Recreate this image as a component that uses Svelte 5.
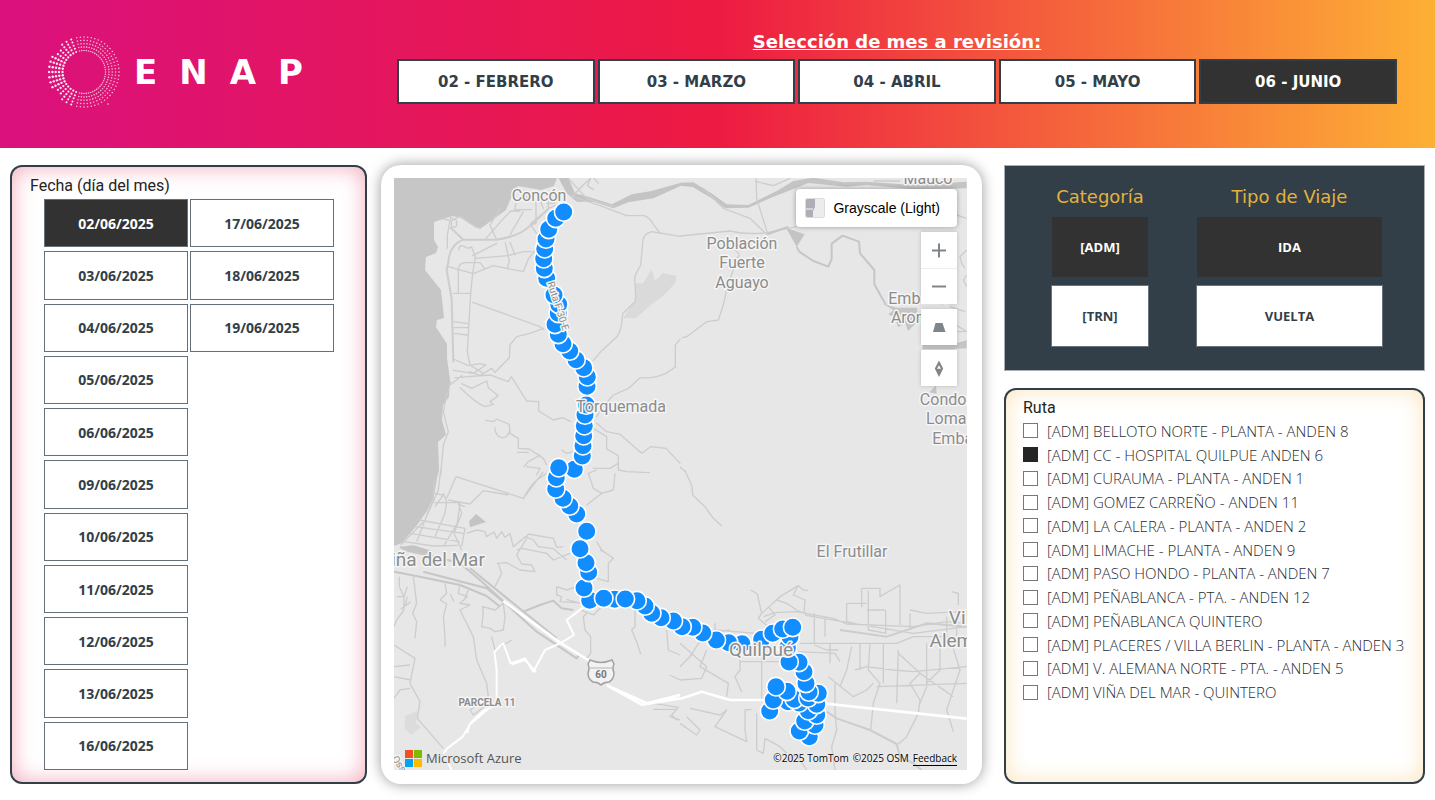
<script>
  const months = ['02 - FEBRERO', '03 - MARZO', '04 - ABRIL', '05 - MAYO', '06 - JUNIO'];
  const dates = [
    '02/06/2025', '03/06/2025', '04/06/2025', '05/06/2025', '06/06/2025', '09/06/2025',
    '10/06/2025', '11/06/2025', '12/06/2025', '13/06/2025', '16/06/2025',
    '17/06/2025', '18/06/2025', '19/06/2025'
  ];
  const routes = [
    '[ADM] BELLOTO NORTE - PLANTA - ANDEN 8',
    '[ADM] CC - HOSPITAL QUILPUE ANDEN 6',
    '[ADM] CURAUMA - PLANTA - ANDEN 1',
    '[ADM] GOMEZ CARREÑO - ANDEN 11',
    '[ADM] LA CALERA - PLANTA - ANDEN 2',
    '[ADM] LIMACHE - PLANTA - ANDEN 9',
    '[ADM] PASO HONDO - PLANTA - ANDEN 7',
    '[ADM] PEÑABLANCA - PTA. - ANDEN 12',
    '[ADM] PEÑABLANCA QUINTERO',
    '[ADM] PLACERES / VILLA BERLIN - PLANTA - ANDEN 3',
    '[ADM] V. ALEMANA NORTE - PTA. - ANDEN 5',
    '[ADM] VIÑA DEL MAR - QUINTERO'
  ];
  const groups = [
    { title: 'Categoría', kind: 'category', options: ['[ADM]', '[TRN]'] },
    { title: 'Tipo de Viaje', kind: 'trip', options: ['IDA', 'VUELTA'] }
  ];

  let month = $state('06 - JUNIO');
  let date = $state('02/06/2025');
  let chosen = $state({ category: '[ADM]', trip: 'IDA' });
  let selectedRoutes = $state(['[ADM] CC - HOSPITAL QUILPUE ANDEN 6']);

  // GPS positions of the trip; northern points are painted over southern ones
  const track = [
    [563.7, 212], [555.7, 218.3], [548.7, 229.3], [546, 239], [544.7, 248.7], [543.7, 258.7],
    [544.3, 268.3], [546.7, 278.3], [554, 295], [558.7, 304.3], [558.3, 313.3], [555, 324.3],
    [558.3, 334.3], [563, 343.7], [569.7, 351], [576, 359.7], [583.7, 367.7], [587.3, 376.7],
    [587, 386.3], [586.3, 405], [585, 415], [584.3, 425.7], [583.7, 435.7], [583, 445.7],
    [582.3, 456], [574.3, 469.3], [558.7, 467.7], [556.3, 477.7], [555.7, 489], [563, 498.3],
    [569.7, 506], [576.7, 514], [586.7, 531.3], [580, 548.7], [586, 562.7], [588.7, 572.3],
    [584, 588], [589.7, 600.3], [603.7, 598.3], [614.7, 599.3], [625.3, 599], [637, 600.7],
    [645, 606], [651.7, 613.3], [661, 617.7], [673.3, 621], [682, 626.7], [692.7, 627.3],
    [702.7, 633], [716.3, 640], [728.7, 642.7], [742, 643.7], [761.7, 639.3], [772.7, 633.3],
    [782.7, 629], [792.7, 627.3], [790, 636.7], [787.3, 648], [789, 662], [799, 662.3],
    [804, 671.7], [806, 683.3], [809, 692], [818.3, 693.3], [808, 698], [816.7, 704.3],
    [816.7, 715], [815, 725], [809.3, 736.7], [799.3, 731], [804.7, 721], [808.3, 710.7],
    [776, 686.7], [787, 691.3], [794.3, 699.3], [788, 701.7], [799, 703], [773.3, 700], [769.7, 711]
  ].sort((a, b) => b[1] - a[1]);

  // The ring is dense and faint on the east side, with fewer, bolder spokes on the west side
  const dots = [];
  [21.5, 25, 28.3, 31.6, 35].forEach((radius, ring) => {
    for (let i = 0; i < 60; i++) {
      const angle = (i / 60) * Math.PI * 2;
      if (Math.cos(angle) < -0.3) continue;
      dots.push([36 + Math.cos(angle) * radius, 36 + Math.sin(angle) * radius, 0.8]);
    }
    for (let i = 0; i < 42; i++) {
      const angle = (i / 42) * Math.PI * 2;
      const west = -Math.cos(angle);
      if (west < 0.3 || (ring === 4 && west > 0.72 && west < 0.85)) continue;
      dots.push([36 - west * radius, 36 + Math.sin(angle) * radius, 0.9 + west * 0.3]);
    }
  });
</script>

<div class="page">
  <header>
    <div class="brand">
      <svg class="ring" viewBox="0 0 72 72" aria-hidden="true">
        {#each dots as [x, y, r]}
          <circle cx={x} cy={y} {r} fill="#fff" fill-opacity={r > 0.85 ? 0.92 : 0.7} />
        {/each}
        <circle cx="60" cy="68" r="1" fill="#fff" fill-opacity=".45" />
      </svg>
      <div class="wordmark"><span>E</span><span>N</span><span>A</span><span>P</span></div>
    </div>
    <div class="months">
      <h1>Selección de mes a revisión:</h1>
      <div class="month-row">
        {#each months as m}
          <button class:on={month === m} aria-pressed={month === m} onclick={() => (month = m)}>{m}</button>
        {/each}
      </div>
    </div>
  </header>

  <main>
    <section class="panel dates-panel">
      <h2>Fecha (día del mes)</h2>
      <div class="dates">
        {#each dates as d}
          <button class:on={date === d} aria-pressed={date === d} onclick={() => (date = d)}>{d}</button>
        {/each}
      </div>
    </section>

    <section class="map-card" aria-label="Recorrido">
      <div class="map">
        <svg class="canvas" viewBox="394 178 573 592" preserveAspectRatio="xMidYMid slice">
          <rect x="394" y="178" width="573" height="592" fill="#e7e7e7" />
          <path fill="#c6c6c6" d="M394 178H557L554 186L541 190L518 186L510 200L506 210L480 229L462 218L452 216L434 222V240L438 247L436 253L426 257L425 270L441 290L444 318L437 320L436 327L447 344V358L450 380L449 397L443 405L442 420L446 435L438 442L439 470L437 478L434 496L427 511L417 525L402 543L394 546Z" />

          <g transform="translate(380 155) scale(.33333)" fill="none" stroke="#cdcdcd" stroke-width="4" stroke-linejoin="round" stroke-linecap="round">
            <path stroke="none" fill="#dadada" d="M730 490L768 430L765 385L790 385L815 342L825 378L848 354L888 362V382L848 424L812 450L768 490Z" />
            <path stroke="none" fill="#c4c4c4" d="M535 68H565L585 115L625 125L696 148L755 118L815 108L900 84V94L820 130L745 142L700 160L640 140L590 140L560 115Z" />
            <path d="M570 122L660 152L740 182H792Q812 190 820 208L840 234L900 244M565 70L620 130L700 155M578 123L612 88L632 70L622 92L640 104M642 70L655 84" />
            <path d="M838 234L815 230Q792 236 789 255L782 330L764 364L767 425L765 440L728 476Q725 530 710 546L665 587L640 617" />
            <path d="M900 553L886 570V636L858 655Q820 672 780 668L746 700L700 720L665 760L650 785" />
            <path stroke-width="6" d="M205 322Q208 270 250 254H350Q420 244 450 212L505 162M250 254L212 218M205 322L200 345L215 432L220 620" />
            <path d="M222 194L242 182M222 194L212 186L202 240V280M215 205a8 8 0 1 0 14 0a8 8 0 1 0-14 0M236 285Q238 262 262 280L275 276L286 305L278 356L272 415L262 590L270 630L310 655M278 302L350 265M285 310L385 302L430 290L454 290M235 415V345Q235 325 255 323H300L315 342M205 335L280 356L340 332L430 350L445 312L480 268M376 262L388 318L383 336M390 262L405 300M350 254L330 210L360 160M318 250L362 200L392 168H420M430 170L390 240M408 145L404 164H455M468 140V205L452 210L470 235M445 130L430 115M480 135L490 160M505 130V160L530 150M500 145H525M453 205L490 175M205 195L190 192M245 188L290 218" />
            <path d="M220 415H272M222 500L264 506M222 518H264M222 535L262 540M220 612L265 632L300 626L318 630L280 655L220 646M268 650L300 662L335 640L345 652L388 608L390 570L410 545L450 535L490 520M278 442L480 515L492 524M225 668L330 660L385 680L394 665L440 738L476 740V768L520 795L548 788L572 800M210 690L245 662M245 686L275 700L320 678L325 698L355 722L330 740L340 748L315 755Q290 745 262 718L240 698M212 680L200 720L190 770L205 830L190 870L182 960M318 796L340 800L350 792L388 808L390 835L415 850V880L448 882L490 910L500 930M345 818a18 22 0 1 0 45 5M432 935L445 920L480 900M440 935L480 940L470 960M412 892L445 892M545 885L560 895L580 890M650 805L680 830L720 838L785 895L812 875L858 880L900 925M640 820L680 845V882L715 902V945L740 950L808 953M640 940L690 940L715 925" />
          </g>

          <g transform="translate(680 155) scale(.33333)" fill="none" stroke="#cdcdcd" stroke-width="4" stroke-linejoin="round">
            <path stroke="none" fill="#c4c4c4" d="M0 83L40 82L90 112L140 148L205 150L290 108L340 78L400 68L490 82L560 80L700 90L860 80V100L700 103L560 90L500 95L385 84L270 130L205 158L135 160L95 130L38 96L0 92Z" />
            <path stroke="none" fill="#c4c4c4" d="M318 218L374 238L350 275ZM610 446L650 458H712V472L695 490L712 500L684 528L676 505L654 517L645 488L625 478L640 466ZM728 570H810L860 556V580L820 582H728ZM768 690L748 712L770 716Z" />
            <path d="M0 243L150 228Q200 240 262 233L350 215M228 70L230 130L262 233M70 100L130 160L210 190L262 240M262 240L320 218M230 80L280 92L330 70M580 78H660" />
            <path stroke-width="6" stroke="#c6c6c6" d="M262 236L325 216M350 275L358 290L400 318L445 335L455 312V266L488 242L537 260L540 295L583 345V388L618 450" />
            <path d="M165 285Q185 300 172 308L150 320L160 345L140 400Q135 440 115 495L80 500L20 545L5 548M830 180L860 190M860 285L840 305L845 325L855 340M860 360L850 375L860 395M810 455L855 470M812 500L860 530M830 530H860M0 935L16 950" />
          </g>

          <g transform="translate(380 470) scale(.33333)" fill="none" stroke="#cdcdcd" stroke-width="4" stroke-linejoin="round">
            <path stroke="none" fill="#c4c4c4" d="M267 154L288 132L318 156L270 172ZM62 230L100 226L160 244L130 256L70 242Z" />
            <path stroke="none" fill="#dcdcdc" d="M75 738L112 722L108 760L122 772L94 795L74 775Z" />
            <path d="M182 0L175 60L135 150L62 225M162 30L160 85L110 215M190 70L200 95L195 130L165 200M162 98H240L232 160L190 230M160 70L190 75L165 110M235 100L245 130L222 190L245 240M105 170L250 190M90 190L240 215M118 150L255 175L245 230M72 215L160 228L235 226M200 85L228 20L430 85L490 5M205 90L270 102L310 62L385 75M430 88Q440 60 470 30L500 10M255 110L240 105M260 190L290 180L315 185L320 200L342 186L350 205L365 185L375 202L390 190L400 230L436 200L460 210L475 230L520 236L560 270M410 240L425 235L500 250L520 270L570 250M350 280L380 278L420 300L465 305L455 285L425 282L410 255L440 205M355 282L365 310L345 350M440 200L445 192L520 205L530 232L550 230M650 215L665 240L700 265L685 280V335L650 325M660 240L680 250M620 105L665 70L700 60L705 10M650 0L625 10L640 55L665 70" />
            <path stroke-width="6" stroke="#c6c6c6" d="M42 305L120 320L240 345L320 378L360 410M130 305L320 355L370 395M60 232L240 280L300 330L470 485L590 565L600 550M270 295L530 505M430 425L480 405L520 392L545 415L580 420" />
            <path d="M530 350L560 360L590 350M530 350V375L545 380L540 395L590 398M560 388L600 400M600 420L640 435L665 410M620 430L610 440L615 480L632 500V550L620 565M765 410V470L755 480L770 515L782 552M58 320V350L72 380V420L50 450L42 470M100 320L110 400L98 430L110 455L105 505M50 380H72L82 350M82 380L75 410M62 418L92 395M195 340L200 370L180 390L200 402L190 440L195 500V530M240 340L235 370L262 380L240 400L270 405L240 420L280 500L290 570L320 640L325 680L300 700L270 720L280 735L320 705M210 372L222 395M265 360L255 385M308 410L345 420L370 400L375 440L370 480L345 485L330 475L305 470L310 430ZM335 500L345 540L395 510M42 525L105 565L90 640L120 695L112 745L190 835M42 590L90 585M42 620L92 630M42 685L60 660L90 655M820 700L895 712L875 735L890 750M820 718H890L870 740L900 750M860 480L865 540L900 555M870 615L900 630" />
            <path stroke="#fff" stroke-width="6" d="M190 850L202 835L248 800L275 755L310 722L350 705V600L343 545L370 520L392 580L435 565L460 605L495 540L540 520L582 495L560 450L610 412M262 790L268 765L330 712M205 880L215 900M395 583L435 570L468 606" />
            <path stroke="#fff" stroke-width="8" d="M370 393L540 518L632 575M680 645L785 704L900 685M700 655L800 700L900 675" />
          </g>

          <g transform="translate(680 470) scale(.33333)" fill="none" stroke="#cdcdcd" stroke-width="4" stroke-linejoin="round">
            <path d="M14 0L35 45L38 75L75 110L100 145L125 168M212 360L232 372L245 430M245 430L300 380L355 347L370 360L385 362M352 350L340 375L375 390L372 430L350 420L320 400L290 390M265 410L285 435L255 455M245 430L235 445L265 470M250 440L285 428L350 425L460 445L500 462L700 470L800 455L860 460M375 435L430 445L700 490L860 470M403 430V520M435 440V500M500 400V455L530 462M500 400H560M545 355V412M545 355H600V380L660 345V465M565 362V480L620 490M560 420H615M617 420V490M690 420L740 430L850 425M690 430V480M815 365L835 370V405M355 545L465 550L480 575M360 520H650L700 500L860 500M403 525L440 540L475 540M450 520V580M515 530L500 600L480 650M525 600L560 590L640 600L700 605L860 590M540 520V600M570 520L565 600L600 640L580 700L572 780M610 520V640M655 540L650 700M655 550L720 610L820 680M720 610L690 640L720 690L715 730L680 800L655 822M740 520V650L720 700M780 510V600L740 640M815 520L840 600L800 720L820 785M590 650L860 640M445 620L520 680L560 660L580 640M465 640V725L470 780L455 830L465 900M800 440V520M830 460V500" />
            <path stroke-width="6" d="M440 725L470 745L570 780L650 822L660 860L700 880L725 900M480 480L620 500L740 460L860 470" />
            <path d="M105 460V480L230 490M0 520L80 590L65 625L0 630M80 540L60 590L145 640L140 680M30 560L75 490L150 480M180 540V600L165 620L185 665M245 560V690M180 575H300M20 740L60 780L50 795L0 760M30 715L120 735L140 720L105 770L200 815L195 780V720L215 718M230 730V840L250 850L255 805L300 830L320 850M320 870L350 855L380 900M0 590L40 550M105 485L160 520" />
            <path stroke="#fff" stroke-width="8" d="M0 687L65 665L150 690H245L380 695L860 746" />
          </g>

          {#each track as [x, y]}
            <circle cx={x} cy={y} r="9.3" fill="#118dff" stroke="#fff" stroke-width="1.6" />
          {/each}

          <g class="labels" text-anchor="middle">
            <text x="539" y="201">Concón</text>
            <text x="621" y="412">Torquemada</text>
            <text x="742" y="249">Población</text>
            <text x="742" y="268">Fuerte</text>
            <text x="742" y="288">Aguayo</text>
            <text x="852" y="557">El Frutillar</text>
            <text x="928" y="184">Mauco</text>
            <text x="919" y="304">Embalse</text>
            <text x="919" y="323">Aromos</text>
            <text x="963" y="405">Condominio</text>
            <text x="963" y="424">Lomas del</text>
            <text x="963" y="444">Embalse</text>
            <g class="city">
              <text x="432" y="566">Viña del Mar</text>
              <text x="761" y="656">Quilpué</text>
              <text x="967" y="624">Villa</text>
              <text x="967" y="647">Alemana</text>
            </g>
            <text class="small bold" x="487" y="706">PARCELA 11</text>
            <text class="small" transform="translate(555 307) rotate(72)" x="0" y="0">Ruta F-30-E</text>
            <text class="small" transform="translate(398 768) rotate(55)" x="0" y="0">Ossa</text>
          </g>
          <path d="M590 660L593 661Q601 664 609 661L612 660L614 664Q612 668 614 673Q614 679 609 682Q604 682 601 685Q598 682 593 682Q588 679 588 673Q590 668 588 664Z" fill="#f2f2f2" stroke="#a2a2a2" stroke-width="1.5" />
          <path d="M590 668H612" stroke="#b5b5b5" />
          <text class="shield" x="601" y="678" text-anchor="middle">60</text>
        </svg>

        <button class="style-picker">
          <svg width="20" height="20" viewBox="0 0 20 20" aria-hidden="true">
            <rect width="20" height="20" rx="2" fill="#ececee" />
            <path d="M1 1H10V9L8 13V19H1Z" fill="#aeaeb6" />
            <path d="M0 11H8" stroke="#f8f8f8" />
            <rect x=".5" y=".5" width="19" height="19" rx="2" fill="none" stroke="#dcdcde" />
          </svg>
          Grayscale (Light)
        </button>
        <div class="controls">
          <div class="zoom">
            <button aria-label="Acercar"><svg viewBox="0 0 36 36"><path d="M11 18.5H25M18 11.5V25.5" /></svg></button>
            <button aria-label="Alejar"><svg viewBox="0 0 36 36"><path d="M11 18.5H25" /></svg></button>
          </div>
          <button aria-label="Inclinar"><svg viewBox="0 0 36 36"><path class="solid" d="M14.5 14H21.5L24.5 23H12Z" /></svg></button>
          <button aria-label="Girar"><svg viewBox="0 0 36 36"><path class="solid" fill-rule="evenodd" d="M18 10.5L22.2 18.5L18 27L13.8 18.5ZM18 15.2L16 18.8H20Z" /></svg></button>
        </div>
        <div class="azure">
          <svg width="17" height="17" viewBox="0 0 17 17" aria-hidden="true">
            <path fill="#f25022" d="M0 0H8V8H0Z" /><path fill="#7fba00" d="M9 0H17V8H9Z" />
            <path fill="#00a4ef" d="M0 9H8V17H0Z" /><path fill="#ffb900" d="M9 9H17V17H9Z" />
          </svg>
          <span>Microsoft Azure</span>
        </div>
        <div class="credits"><span>©2025 TomTom</span><span>©2025 OSM</span><a href="#feedback">Feedback</a></div>
      </div>
    </section>

    <div class="side">
      <section class="filters">
        {#each groups as g}
          <div class="group {g.kind}">
            <h2>{g.title}</h2>
            {#each g.options as o}
              <button class:on={chosen[g.kind] === o} aria-pressed={chosen[g.kind] === o} onclick={() => (chosen[g.kind] = o)}>{o}</button>
            {/each}
          </div>
        {/each}
      </section>
      <section class="panel routes-panel">
        <h2>Ruta</h2>
        <div class="routes">
          {#each routes as r}
            <label><input type="checkbox" value={r} bind:group={selectedRoutes} /><span>{r}</span></label>
          {/each}
        </div>
      </section>
    </div>
  </main>
</div>

<style>
  :global(body) { margin: 0; background: #fff; }
  * { box-sizing: border-box; }
  h1, h2 { margin: 0; font-weight: 400; }
  button { font: inherit; padding: 0; cursor: pointer; }

  .page { min-height: 100vh; display: flex; flex-direction: column; color: #333f48; }

  header {
    display: flex;
    justify-content: space-between;
    gap: 48px;
    height: 148px;
    padding: 0 38px 0 48px;
    background: linear-gradient(90deg, #da117e 0%, #ed1a42 50%, #fdb035 100%);
    font-family: "DejaVu Sans", Verdana, sans-serif;
  }
  .brand { display: flex; align-items: center; gap: 14px; height: 144px; color: #fff; }
  .ring { width: 72px; height: 72px; }
  .wordmark { display: flex; gap: 22px; font-size: 34px; line-height: 40px; font-weight: 700; }
  .months { flex: 0 1 1000px; padding-top: 30px; }
  h1 {
    color: #fff;
    font-size: 18px;
    line-height: 24px;
    font-weight: 700;
    text-align: center;
    text-decoration: underline;
  }
  .month-row { display: grid; grid-template-columns: repeat(5, 1fr); gap: 3px; margin-top: 5px; }
  .month-row button {
    height: 45px;
    border: 2px solid #333f48;
    background: #fff;
    color: #333f48;
    font-size: 15px;
    font-weight: 700;
  }

  main {
    flex: 1;
    display: grid;
    grid-template-columns: 357fr 601fr 429fr;
    gap: 14px;
    padding: 17px 10px 16px 10px;
  }

  .panel { display: flex; flex-direction: column; border: 2px solid #333f48; border-radius: 12px; }
  .panel h2 {
    font-family: Roboto, sans-serif;
    font-size: 16px;
    line-height: 20px;
    color: #252423;
  }
  .dates-panel { padding: 9px 31px 12px 32px; box-shadow: inset 0 0 22px #f3a9ba; }
  .dates-panel h2 { margin: 0 -14px; }
  .dates {
    flex: 1;
    display: grid;
    grid-auto-flow: column;
    grid-template-rows: repeat(11, 1fr);
    grid-template-columns: 1fr 1fr;
    gap: 4px 2px;
    margin-top: 3px;
    font-family: "Open Sans", "Segoe UI", sans-serif;
    font-size: 14px;
    font-weight: 700;
  }
  .dates button { min-height: 40px; border: 1px solid #66707a; background: #fff; color: #333f48; }
  button.on, .dates button.on, .month-row button.on { background: #323232; color: #fff; }

  .map-card {
    padding: 13px 15px 14px 13px;
    border-radius: 20px;
    background: #fff;
    box-shadow: 0 0 14px rgba(0, 0, 0, 0.4);
  }
  .map { position: relative; height: 100%; overflow: hidden; background: #e7e7e7; }
  .canvas { position: absolute; inset: 0; width: 100%; height: 100%; }
  .labels {
    font-family: Roboto, sans-serif;
    font-size: 16px;
    fill: #8c8c8c;
    stroke: #f5f5f5;
    stroke-width: 3px;
    stroke-linejoin: round;
    paint-order: stroke;
  }
  .city { font-size: 19px; }
  .small { font-size: 10px; }
  .bold { font-weight: 700; }
  .shield { font: 700 10px Roboto, sans-serif; fill: #777; }

  .style-picker {
    position: absolute;
    top: 11px;
    right: 10px;
    display: flex;
    align-items: center;
    gap: 8px;
    height: 38px;
    padding: 0 17px 0 9px;
    border: 0;
    border-radius: 4px;
    background: #fff;
    box-shadow: 0 0 5px rgba(0, 0, 0, 0.35);
    color: #000;
    font-family: "Liberation Sans", Arial, sans-serif;
    font-size: 14px;
  }
  .controls { position: absolute; top: 54px; right: 10px; display: grid; gap: 5px; }
  .zoom, .controls > button { box-shadow: 0 0 4px rgba(0, 0, 0, 0.2); }
  .controls button { display: block; width: 36px; height: 36px; border: 0; background: #fff; }
  .zoom button + button { box-shadow: inset 0 1px #eee; }
  .controls svg { display: block; width: 36px; height: 36px; fill: none; stroke: #80858a; stroke-width: 2; }
  .controls .solid { fill: #80858a; stroke: none; }

  .azure {
    position: absolute;
    left: 11px;
    bottom: 2px;
    display: flex;
    align-items: center;
    gap: 4px;
    height: 20px;
    color: #555;
    font: 400 13px "Open Sans", "Segoe UI", sans-serif;
  }
  .credits {
    position: absolute;
    right: 10px;
    bottom: 4px;
    display: flex;
    gap: 4px;
    color: #000;
    font: 10px/14px "Open Sans", "Segoe UI", sans-serif;
    text-shadow: 0 0 2px #fff;
  }
  .credits a { color: #000; text-decoration: none; border-bottom: 1px solid #000; }

  .side { display: flex; flex-direction: column; gap: 17px; padding-left: 8px; }
  .filters {
    display: flex;
    justify-content: space-between;
    height: 206px;
    padding: 19px 41px 22px 46px;
    border: 1px solid #a9aeb3;
    background: #333f48;
  }
  .group { display: grid; grid-template-rows: 24px 62px 62px; row-gap: 7px; }
  .category { flex: 0 1 98px; }
  .trip { flex: 0 1 187px; }
  .group h2 {
    color: #e3b23c;
    font-family: "DejaVu Sans", Verdana, sans-serif;
    font-size: 18px;
    line-height: 24px;
    text-align: center;
    white-space: nowrap;
  }
  .group button {
    border: 1px solid #68727a;
    background: #fff;
    color: #333f48;
    font-family: "Open Sans", "Segoe UI", sans-serif;
    font-size: 13px;
    font-weight: 700;
  }
  .group button.on { border-color: #333f48; background: #323232; color: #fff; }

  .routes-panel { flex: 1; padding: 8px 12px 78px 17px; box-shadow: inset 0 0 22px #fbe5bd; }
  .routes { flex: 1; display: grid; grid-template-rows: repeat(12, 1fr); margin-top: 1px; }
  .routes label {
    display: flex;
    align-items: center;
    gap: 9px;
    font-family: "Open Sans", "Segoe UI", sans-serif;
    font-size: 15px;
    line-height: 20px;
    font-weight: 300;
    color: #1f2b34;
    white-space: nowrap;
  }
  .routes input {
    appearance: none;
    flex: none;
    width: 15px;
    height: 15px;
    margin: 0;
    border: 1px solid #777;
    background: #fff;
  }
  .routes input:checked { border-color: #252525; background: #252525; }
</style>
